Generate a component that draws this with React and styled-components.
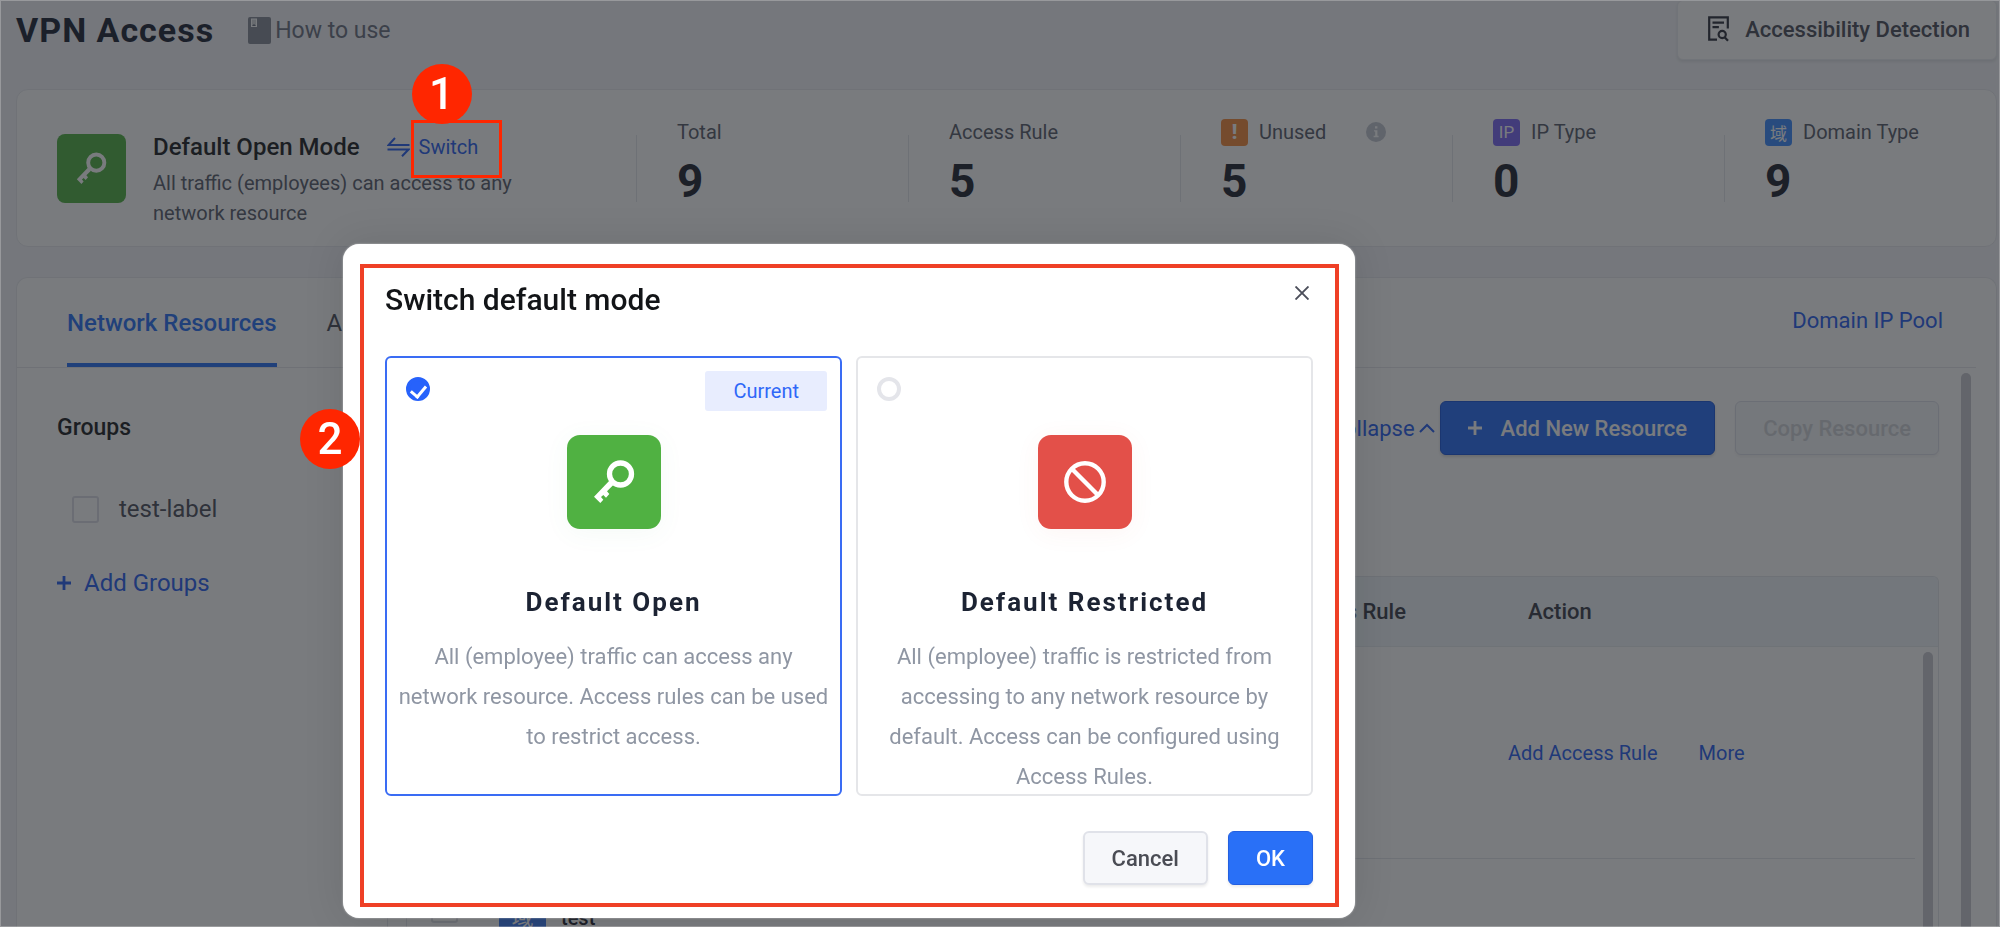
import React from 'react';
import styled, { createGlobalStyle } from 'styled-components';

const STATS = [
  { label: 'Total', value: 9 },
  { label: 'Access Rule', value: 5 },
  { label: 'Unused', value: 5, badge: '!', color: '#f58a3c', info: true },
  { label: 'IP Type', value: 0, badge: 'IP', color: '#7a66f5' },
  { label: 'Domain Type', value: 9, badge: '域', color: '#3c8cff' },
];

const MODES = [
  {
    id: 'open',
    title: 'Default Open',
    text: 'All (employee) traffic can access any network resource. Access rules can be used to restrict access.',
  },
  {
    id: 'restricted',
    title: 'Default Restricted',
    text: 'All (employee) traffic is restricted from accessing to any network resource by default. Access can be configured using Access Rules.',
  },
];

const KeyIcon = () => (
  <svg viewBox="0 0 94 94" width="100%" height="100%" aria-hidden="true">
    <circle cx="53.5" cy="39" r="11" fill="none" stroke="#fff" strokeWidth="5.3" />
    <path
      fill="#fff"
      d="M42.3 45.7 27 61.7l6.3 6.3 3-3.3-2.3-2.7 2.3-2 2.7 2.7 3.3-3.7-2.3-2.7 6.3-6.3z"
    />
  </svg>
);

const BanIcon = () => (
  <svg viewBox="0 0 94 94" width="100%" height="100%" aria-hidden="true">
    <g fill="none" stroke="#fff" strokeWidth="4.4">
      <circle cx="47" cy="47" r="18.7" />
      <path d="M33.8 33.8 60.2 60.2" />
    </g>
  </svg>
);

const BookIcon = () => (
  <svg width="23" height="27" viewBox="0 0 23 27" aria-hidden="true">
    <rect width="23" height="27" rx="2" fill="#878b97" />
    <path fill="#fff" d="M3 1.5h6V10H3z" />
    <path fill="#878b97" d="M4 2.5h4V9H4z" opacity=".35" />
    <path fill="#6b7080" d="M6 7 8 9H4z" />
  </svg>
);

const DetectIcon = () => (
  <svg width="21" height="26" viewBox="0 0 21 26" fill="none" stroke="#2d303b" strokeWidth="2.2" aria-hidden="true">
    <path d="M19.8 12.5V1.3H1.2v22.4H9M4.5 6.7H16M4.5 11.2h6.4" />
    <circle cx="14.2" cy="18.5" r="3.6" />
    <path d="m16.6 21.2 3.4 3.6" />
  </svg>
);

const SwapIcon = () => (
  <svg width="23" height="20" viewBox="0 0 23 20" fill="none" stroke="#2860f0" strokeWidth="2" aria-hidden="true">
    <path d="M22.5 8H1.5L8 1M.5 12.5h21L15 19.3" />
  </svg>
);

const PlusIcon = () => (
  <svg width="14" height="14" viewBox="0 0 14 14" fill="none" stroke="currentColor" strokeWidth="2.8" aria-hidden="true">
    <path d="M7 0v14M0 7h14" />
  </svg>
);

const ChevronUpIcon = () => (
  <svg width="16" height="10" viewBox="0 0 16 10" fill="none" stroke="currentColor" strokeWidth="2" aria-hidden="true">
    <path d="M1 9 8 2l7 7" />
  </svg>
);

const CloseIcon = () => (
  <svg width="14" height="14" viewBox="0 0 14 14" fill="none" stroke="#4b4e5a" strokeWidth="1.9" aria-hidden="true">
    <path d="m.5.5 13 13M13.5.5l-13 13" />
  </svg>
);

const InfoIcon = () => (
  <svg width="20" height="20" viewBox="0 0 20 20" aria-hidden="true">
    <circle cx="10" cy="10" r="10" fill="#c3c7d1" />
    <path fill="#fff" d="M9 4.2h2.4v2.2H9zM8 8.2h3.4v5.6h1.2v1.4H7.6v-1.4h1.6V9.6H8z" />
  </svg>
);

const App = () => {
  const [mode, setMode] = React.useState('open');

  return (
    <Page>
      <GlobalStyle />
      <TopBar>
        <PageTitle>VPN Access</PageTitle>
        <HowTo href="#how-to-use">
          <BookIcon />
          How to use
        </HowTo>
        <DetectButton>
          <DetectIcon />
          Accessibility Detection
        </DetectButton>
      </TopBar>

      <Content>
        <SummaryCard>
          <ModeSummary>
            <ModeTile $size={69}>
              <KeyIcon />
            </ModeTile>
            <ModeText>
              <ModeTitleRow>
                <ModeTitle>Default Open Mode</ModeTitle>
                <SwitchButton>
                  <SwapIcon />
                  Switch
                  <SwitchOutline />
                  <SwitchStep>1</SwitchStep>
                </SwitchButton>
              </ModeTitleRow>
              <ModeDesc>All traffic (employees) can access to any network resource</ModeDesc>
            </ModeText>
          </ModeSummary>
          <Stats>
            {STATS.map((stat) => (
              <Stat key={stat.label}>
                <StatDivider />
                <StatBody>
                  <StatLabel>
                    {stat.badge && <TypeBadge $color={stat.color} $strong={stat.info}>{stat.badge}</TypeBadge>}
                    {stat.label}
                    {stat.info && (
                      <InfoSlot>
                        <InfoIcon />
                      </InfoSlot>
                    )}
                  </StatLabel>
                  <StatValue>{stat.value}</StatValue>
                </StatBody>
              </Stat>
            ))}
          </Stats>
        </SummaryCard>

        <ResourceCard>
          <TabBar>
            <Tab $active>Network Resources</Tab>
            <Tab>Access Rules</Tab>
            <PoolLink href="#domain-ip-pool">Domain IP Pool</PoolLink>
          </TabBar>
          <ResourceBody>
            <Sidebar>
              <SidebarTitle>Groups</SidebarTitle>
              <GroupRow>
                <Checkbox />
                test-label
              </GroupRow>
              <AddGroup>
                <PlusIcon />
                Add Groups
              </AddGroup>
            </Sidebar>
            <Main>
              <Toolbar>
                <CollapseButton>
                  Collapse
                  <ChevronUpIcon />
                </CollapseButton>
                <ToolButton $primary>
                  <PlusIcon />
                  Add New Resource
                </ToolButton>
                <ToolButton disabled>Copy Resource</ToolButton>
              </Toolbar>
              <TableWrap>
                <Table>
                  <colgroup>
                    <col />
                    <RuleCol />
                    <ActionCol />
                    <GutterCol />
                  </colgroup>
                  <thead>
                    <tr>
                      <Th />
                      <Th>Access Rule</Th>
                      <Th $indent>Action</Th>
                      <Th />
                    </tr>
                  </thead>
                  <tbody>
                    <tr>
                      <Td />
                      <Td />
                      <Td>
                        <RowActions>
                          <RowLink href="#add-rule">Add Access Rule</RowLink>
                          <RowLink href="#more">More</RowLink>
                        </RowActions>
                      </Td>
                      <GutterCell />
                    </tr>
                    <tr>
                      <Td $top>
                        <ResourceName>
                          <Checkbox aria-label="Select test" />
                          <NameChip>域</NameChip>
                          <NameText>test</NameText>
                        </ResourceName>
                      </Td>
                      <Td />
                      <Td />
                      <GutterCell />
                    </tr>
                  </tbody>
                </Table>
                <TableScroll />
              </TableWrap>
            </Main>
            <PageScroll />
          </ResourceBody>
        </ResourceCard>
      </Content>

      <Overlay>
        <Modal role="dialog" aria-labelledby="switch-title">
          <ModalStep>2</ModalStep>
          <ModalInner>
            <ModalHeader>
              <ModalTitle id="switch-title">Switch default mode</ModalTitle>
              <CloseButton aria-label="Close">
                <CloseIcon />
              </CloseButton>
            </ModalHeader>
            <ModeList>
              {MODES.map((m) => (
                <ModeCard key={m.id} $selected={mode === m.id}>
                  <ModeCardTop>
                    <Radio name="mode" checked={mode === m.id} onChange={() => setMode(m.id)} />
                    {m.id === 'open' && <CurrentTag>Current</CurrentTag>}
                  </ModeCardTop>
                  <ModeTile $size={94} $restricted={m.id === 'restricted'} $glow>
                    {m.id === 'restricted' ? <BanIcon /> : <KeyIcon />}
                  </ModeTile>
                  <ModeCardTitle>{m.title}</ModeCardTitle>
                  <ModeCardText>{m.text}</ModeCardText>
                </ModeCard>
              ))}
            </ModeList>
            <ModalFooter>
              <ModalButton>Cancel</ModalButton>
              <ModalButton $primary>OK</ModalButton>
            </ModalFooter>
          </ModalInner>
        </Modal>
      </Overlay>
    </Page>
  );
};

export default App;

const GlobalStyle = createGlobalStyle`
  * {
    box-sizing: border-box;
  }

  body {
    margin: 0;
    font-family: Roboto, 'Noto Sans CJK SC', sans-serif;
    color: #1f232e;
  }

  button {
    font-family: inherit;
    cursor: pointer;
  }

  a {
    text-decoration: none;
  }

  svg {
    display: block;
    flex: none;
  }
`;

const Page = styled.div`
  display: flex;
  flex-direction: column;
  height: 100vh;
  overflow: hidden;
  background: #f4f5f9;
`;

const TopBar = styled.header`
  display: flex;
  align-items: center;
  flex: none;
  height: 60px;
  padding: 0 3px 0 16px;
`;

const PageTitle = styled.h1`
  margin: 0;
  font-size: 34px;
  font-weight: 700;
  letter-spacing: 1px;
  color: #1c2333;
`;

const HowTo = styled.a`
  display: flex;
  align-items: center;
  gap: 4px;
  margin-left: 34px;
  font-size: 23px;
  color: #6b7080;
`;

const DetectButton = styled.button`
  display: flex;
  align-items: center;
  gap: 16px;
  height: 60px;
  margin-left: auto;
  padding: 0 26px 2px 30px;
  border: 1px solid #ecedf2;
  border-radius: 6px;
  background: #fff;
  box-shadow: 0 2px 3px rgba(0, 0, 0, 0.08);
  font-size: 22px;
  font-weight: 500;
  color: #4b4e5a;
`;

const Content = styled.main`
  display: flex;
  flex-direction: column;
  flex: 1;
  gap: 30px;
  min-height: 0;
  padding: 29px 3px 0 16px;
`;

const SummaryCard = styled.section`
  display: flex;
  align-items: center;
  flex: none;
  height: 158px;
  border: 1px solid #e9eaef;
  border-radius: 12px;
  background: #fff;
`;

const ModeSummary = styled.div`
  display: flex;
  align-items: center;
  gap: 27px;
  width: 619px;
  height: 100%;
  padding-left: 40px;
`;

const ModeTile = styled.div`
  flex: none;
  width: ${(p) => p.$size}px;
  height: ${(p) => p.$size}px;
  border-radius: ${(p) => (p.$glow ? 13 : 8)}px;
  background: ${(p) => (p.$restricted ? '#e35049' : '#50b142')};
  box-shadow: ${(p) => {
    if (!p.$glow) return 'none';
    return p.$restricted ? '0 4px 26px rgba(227, 80, 73, 0.06)' : '0 4px 26px rgba(80, 177, 120, 0.06)';
  }};
`;

const ModeText = styled.div`
  align-self: flex-start;
  padding-top: 36px;
`;

const ModeTitleRow = styled.div`
  display: flex;
  align-items: center;
  gap: 27px;
  height: 42px;
`;

const ModeTitle = styled.h2`
  margin: 0;
  font-size: 24px;
  font-weight: 500;
  color: #1c1d22;
`;

const SwitchButton = styled.button`
  position: relative;
  display: flex;
  align-items: center;
  gap: 9px;
  padding: 0;
  border: 0;
  background: none;
  font-size: 20px;
  color: #2860f0;
`;

const StepMark = styled.span`
  position: absolute;
  z-index: 20;
  display: flex;
  align-items: center;
  justify-content: center;
  width: 60px;
  height: 60px;
  border-radius: 50%;
  background: #ff2600;
  font-size: 44px;
  font-weight: 500;
  color: #fff;
`;

const SwitchStep = styled(StepMark)`
  top: -71px;
  left: 25px;
`;

const SwitchOutline = styled.span`
  position: absolute;
  z-index: 20;
  top: -15px;
  left: 24px;
  width: 91px;
  height: 58px;
  border: 3px solid #ff2600;
`;

const ModeDesc = styled.p`
  max-width: 380px;
  margin: 0;
  font-size: 20px;
  line-height: 30px;
  color: #575c6b;
`;

const Stats = styled.div`
  display: grid;
  grid-template-columns: repeat(5, 1fr);
  flex: 1;
`;

const Stat = styled.div`
  display: flex;
  align-items: center;
  gap: 40px;
`;

const StatDivider = styled.span`
  width: 1px;
  height: 67px;
  background: #e4e6ec;
`;

const StatBody = styled.div`
  padding-bottom: 1px;
`;

const StatLabel = styled.div`
  display: flex;
  align-items: center;
  gap: 11px;
  height: 28px;
  font-size: 20px;
  white-space: nowrap;
  color: #575c6b;
`;

const TypeBadge = styled.span`
  display: flex;
  align-items: center;
  justify-content: center;
  width: 27px;
  height: 27px;
  border-radius: 4px;
  background: ${(p) => p.$color};
  font-size: ${(p) => (p.$strong ? 20 : 17)}px;
  font-weight: ${(p) => (p.$strong ? 900 : 400)};
  color: #fff;
`;

const InfoSlot = styled.span`
  margin-left: 29px;
`;

const StatValue = styled.div`
  font-size: 46px;
  font-weight: 700;
  line-height: 71px;
  color: #1f232e;
`;

const ResourceCard = styled.section`
  display: flex;
  flex-direction: column;
  flex: 1;
  min-height: 0;
  border: 1px solid #e9eaef;
  border-bottom: 0;
  border-radius: 12px 12px 0 0;
  background: #fff;
`;

const TabBar = styled.nav`
  display: flex;
  flex: none;
  gap: 50px;
  height: 90px;
  margin-right: 20px;
  padding: 0 33px 0 50px;
  border-bottom: 1px solid #e6e7ec;
`;

const Tab = styled.button`
  padding: 4px 0 0;
  border: 0;
  border-bottom: 4px solid ${(p) => (p.$active ? '#2970f6' : 'transparent')};
  border-radius: 3px 3px 0 0;
  background: none;
  font-size: 24px;
  font-weight: ${(p) => (p.$active ? 500 : 400)};
  color: ${(p) => (p.$active ? '#2970f6' : '#4b4e5a')};
`;

const PoolLink = styled.a`
  align-self: center;
  margin-left: auto;
  padding-bottom: 4px;
  font-size: 22px;
  color: #2860f0;
`;

const ResourceBody = styled.div`
  display: flex;
  flex: 1;
  min-height: 0;
`;

const Sidebar = styled.aside`
  flex: none;
  width: 371px;
  padding: 46px 0 0 40px;
  border-right: 1px solid #e4e6ec;
`;

const SidebarTitle = styled.h3`
  margin: 0;
  font-size: 23px;
  font-weight: 500;
  line-height: 28px;
  color: #1c1d22;
`;

const GroupRow = styled.label`
  display: flex;
  align-items: center;
  gap: 20px;
  margin: 53px 0 0 15px;
  font-size: 24px;
  line-height: 28px;
  color: #4b4e5a;
`;

const Checkbox = styled.input.attrs({ type: 'checkbox' })`
  appearance: none;
  flex: none;
  width: 27px;
  height: 27px;
  margin: 0;
  border: 2px solid #dcdee6;
  border-radius: 3px;
  background: #fff;
`;

const AddGroup = styled.button`
  display: flex;
  align-items: center;
  gap: 13px;
  margin-top: 46px;
  padding: 0;
  border: 0;
  background: none;
  font-size: 24px;
  line-height: 28px;
  color: #2860f0;
`;

const Main = styled.div`
  display: flex;
  flex-direction: column;
  flex: 1;
  min-width: 0;
  padding: 33px 0 0 18px;
`;

const Toolbar = styled.div`
  display: flex;
  align-items: center;
  justify-content: flex-end;
  gap: 20px;
  flex: none;
  height: 54px;
`;

const CollapseButton = styled.button`
  display: flex;
  align-items: center;
  gap: 4px;
  margin-right: -15px;
  padding: 0;
  border: 0;
  background: none;
  font-size: 22px;
  color: #2860f0;
`;

const ToolButton = styled.button`
  display: flex;
  align-items: center;
  gap: 19px;
  height: 54px;
  padding: 0 27px;
  border: 1px solid ${(p) => (p.$primary ? '#1c57dc' : '#dedfea')};
  border-radius: 6px;
  background: ${(p) => (p.$primary ? '#296ff7' : '#f5f8fa')};
  box-shadow: 0 2px 3px rgba(0, 0, 0, 0.15);
  font-size: 22px;
  font-weight: 500;
  color: #fff;

  &:disabled {
    box-shadow: 0 2px 3px rgba(0, 0, 0, 0.05);
    color: #d2d4d9;
  }
`;

const TableWrap = styled.div`
  position: relative;
  flex: 1;
  min-height: 0;
  margin-top: 121px;
  overflow: hidden;
  border: 1px solid #e4e6ec;
  border-bottom: 0;
  border-radius: 6px 6px 0 0;
`;

const Table = styled.table`
  width: 100%;
  table-layout: fixed;
  border-collapse: separate;
  border-spacing: 0;
`;

const RuleCol = styled.col`
  width: 223px;
`;

const ActionCol = styled.col`
  width: 407px;
`;

const GutterCol = styled.col`
  width: 23px;
`;

const Th = styled.th`
  height: 70px;
  padding: 0 0 0 ${(p) => (p.$indent ? 20 : 0)}px;
  border-bottom: 1px solid #e6ebef;
  background: #f0f6f9;
  font-size: 22px;
  font-weight: 500;
  text-align: left;
  color: #3a3d49;
`;

const Td = styled.td`
  height: 212px;
  padding: ${(p) => (p.$top ? '37px 0 0 24px' : '0')};
  border-bottom: 1px solid #e4e6ec;
  vertical-align: ${(p) => (p.$top ? 'top' : 'middle')};
`;

const GutterCell = styled.td`
  padding: 0;
`;

const RowActions = styled.div`
  display: flex;
  gap: 41px;
`;

const RowLink = styled.a`
  font-size: 20px;
  color: #2860f0;
`;

const ResourceName = styled.div`
  display: flex;
  align-items: flex-start;
  font-size: 20px;
  font-weight: 500;
  line-height: 28px;
`;

const NameChip = styled.span`
  width: 47px;
  height: 28px;
  margin: 8px 0 0 41px;
  border-radius: 3px;
  background: #3c7cf5;
  font-size: 22px;
  font-weight: 400;
  text-align: center;
  color: #fff;
`;

const NameText = styled.span`
  margin: 8px 0 0 15px;
`;

const TableScroll = styled.span`
  position: absolute;
  top: 75px;
  right: 5px;
  bottom: 0;
  width: 10px;
  border-radius: 5px 5px 0 0;
  background: #c9cad0;
`;

const PageScroll = styled.span`
  flex: none;
  width: 10px;
  margin: 5px 25px 0 22px;
  border-radius: 5px 5px 0 0;
  background: #c9cad0;
`;

const Overlay = styled.div`
  position: fixed;
  inset: 0;
  z-index: 10;
  padding: 243px 0 0 342px;
  border: 1px solid rgba(255, 255, 255, 0.25);
  background: rgba(28, 30, 36, 0.59);
`;

const Modal = styled.div`
  position: relative;
  width: 1012px;
  padding: 20px 16px 11px 17px;
  border-radius: 16px;
  background: #fff;
  box-shadow: 0 0 2px rgba(255, 255, 255, 0.6), 0 0 40px rgba(0, 0, 0, 0.12);
`;

const ModalStep = styled(StepMark)`
  top: 165px;
  left: -43px;
`;

const ModalInner = styled.div`
  padding: 17px 22px 18px 21px;
  border: 4px solid #ef4026;
`;

const ModalHeader = styled.div`
  display: flex;
  align-items: flex-start;
  justify-content: space-between;
  height: 71px;
`;

const ModalTitle = styled.h2`
  margin: 0;
  font-size: 30px;
  font-weight: 500;
  line-height: 30px;
  color: #121417;
`;

const CloseButton = styled.button`
  padding: 1px 4px;
  border: 0;
  background: none;
`;

const ModeList = styled.div`
  display: grid;
  grid-template-columns: 1fr 1fr;
  gap: 14px;
`;

const ModeCard = styled.label`
  display: flex;
  flex-direction: column;
  align-items: center;
  height: 440px;
  padding: 13px 8px 0;
  border: 2px solid ${(p) => (p.$selected ? '#3a6cf4' : '#e5e6e9')};
  border-radius: 6px;
  background: #fff;
`;

const ModeCardTop = styled.div`
  display: flex;
  align-items: flex-start;
  justify-content: space-between;
  flex: none;
  width: 100%;
  height: 64px;
  padding: 0 5px 0 11px;
`;

const Radio = styled.input.attrs({ type: 'radio' })`
  appearance: none;
  display: flex;
  justify-content: center;
  width: 24px;
  height: 24px;
  margin: 6px 0 0;
  border: 4px solid #e4e5ea;
  border-radius: 50%;

  &:checked {
    border-color: #2762fb;
    background: #2762fb;
  }

  &:checked::after {
    content: '';
    flex: none;
    width: 12px;
    height: 7px;
    margin-top: 4px;
    border: solid #fff;
    border-width: 0 0 3px 3px;
    transform: rotate(-50deg);
  }
`;

const CurrentTag = styled.span`
  padding: 0 28px;
  border-radius: 3px;
  background: #e8edfe;
  font-size: 20px;
  line-height: 40px;
  color: #2f68f8;
`;

const ModeCardTitle = styled.strong`
  margin-top: 57px;
  font-size: 26px;
  font-weight: 700;
  line-height: 32px;
  letter-spacing: 2px;
  color: #1c2333;
`;

const ModeCardText = styled.span`
  margin-top: 19px;
  font-size: 22px;
  line-height: 40px;
  text-align: center;
  color: #8f96a3;
`;

const ModalFooter = styled.div`
  display: flex;
  justify-content: flex-end;
  gap: 20px;
  margin-top: 35px;
`;

const ModalButton = styled.button`
  height: 54px;
  padding: 0 27px;
  border: ${(p) => (p.$primary ? '1px solid #2460e0' : '2px solid #e0e2e9')};
  border-radius: 6px;
  background: ${(p) => (p.$primary ? '#2970f7' : '#f6f7fa')};
  box-shadow: 0 2px 3px rgba(0, 0, 0, 0.08);
  font-size: 22px;
  font-weight: 500;
  color: ${(p) => (p.$primary ? '#fff' : '#4a4c54')};
`;
